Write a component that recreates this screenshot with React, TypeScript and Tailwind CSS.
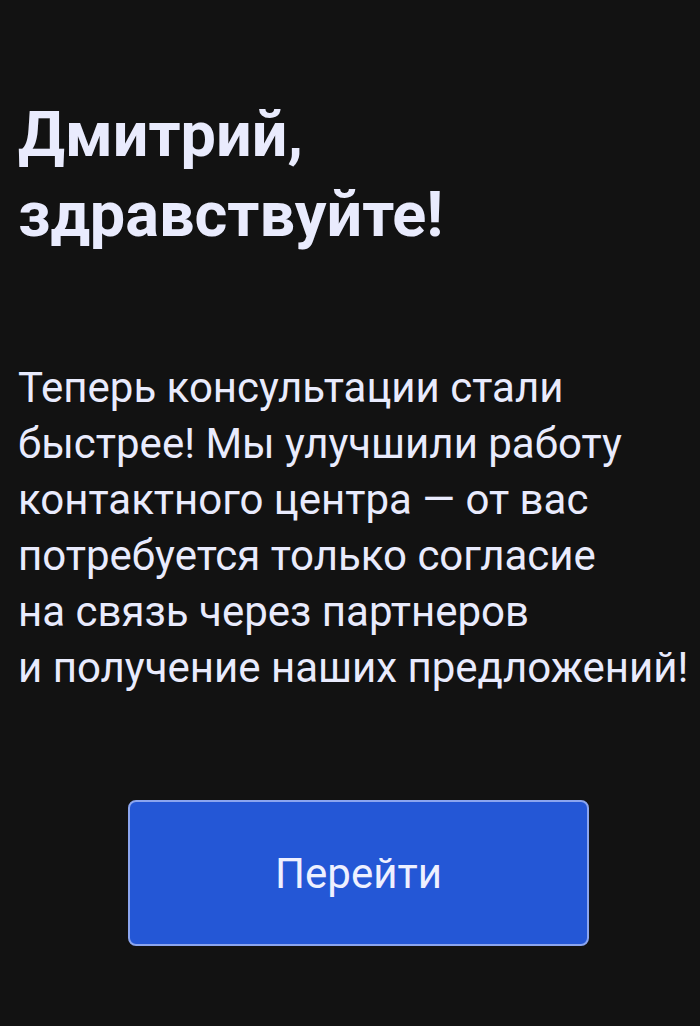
export default function App() {
    return (
        <div className="min-h-[1026px] w-full bg-[#121212] text-[#e9ebfd] font-['Roboto',sans-serif] flex flex-col">
            {/* Greeting */}
            <h1 className="px-[18px] pt-[95px] text-[63px] leading-[80px] font-bold">
                Дмитрий,
                <br />
                здравствуйте!
            </h1>

            {/* Message */}
            <p className="px-[18px] mt-[105px] text-[42px] leading-[56px] whitespace-nowrap">
                Теперь консультации стали
                <br />
                быстрее! Мы улучшили работу
                <br />
                контактного центра — от вас
                <br />
                потребуется только согласие
                <br />
                на связь через партнеров
                <br />
                и получение наших предложений!
            </p>

            {/* Action */}
            <div className="flex mt-[104px] pl-[128px]">
                <button className="w-[461px] h-[146px] rounded-[8px] bg-[#2457d6] border-2 border-[#8ba5ef] text-[42px] text-[#eef0ff]">
                    Перейти
                </button>
            </div>
        </div>
    );
}
